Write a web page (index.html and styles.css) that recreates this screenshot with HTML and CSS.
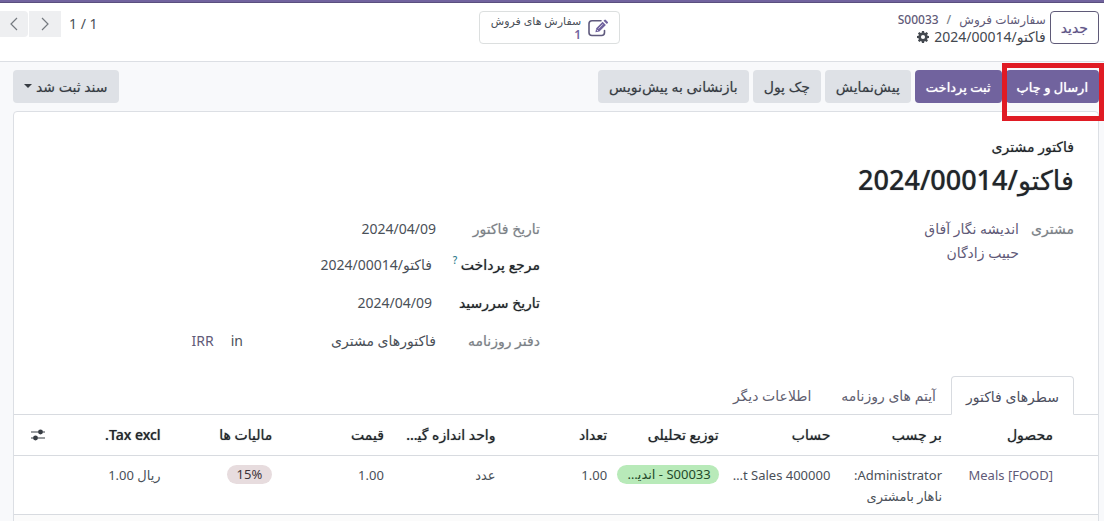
FILE: index.html
```html
<!DOCTYPE html>
<html lang="fa" dir="rtl">
<head>
<meta charset="utf-8">
<title>فاکتو/2024/00014</title>
<meta name="viewport" content="width=device-width, initial-scale=1">
<link rel="stylesheet" href="styles.css">
</head>
<body>
<div class="navbar-edge"></div>
<header class="control-panel">
  <div class="control-start">
    <button class="btn btn-outline" type="button">جدید</button>
    <nav class="breadcrumb" aria-label="مسیر">
      <div class="crumbs"><a href="#orders">سفارشات فروش</a><span class="crumb-sep">/</span><a href="#order">S00033</a></div>
      <div class="crumb-current"><span>فاکتو/2024/00014</span>
        <button class="gear" type="button" aria-label="تنظیمات">
          <svg viewBox="0 0 14 14" width="12" height="12"><path fill="currentColor" fill-rule="evenodd" d="M5.8 0h2.4l.4 1.9 1 .4L11.200 1.200l1.700 1.700-1.100 1.600.4 1 1.800.4v2.300l-1.900.4-.4 1 1.100 1.600-1.700 1.700-1.600-1.100-1 .4L8.200 14H5.800l-.4-1.800-1-.4-1.600 1.100-1.700-1.700 1.100-1.600-.4-1L0 8.200V5.900l1.800-.4.4-1L1.100 2.900l1.700-1.700 1.600 1.100 1-.4zM7 4.600a2.400 2.400 0 1 0 0 4.800 2.400 2.400 0 0 0 0-4.800z"/></svg>
        </button>
      </div>
    </nav>
  </div>
  <button class="stat-button" type="button">
    <svg viewBox="0 0 20 18" width="20" height="18" fill="none"><path d="M13 1.800H4A3 3 0 0 0 1 4.800v8.700a3 3 0 0 0 3 3h9.500a3 3 0 0 0 3-3V11.500" stroke="#5f5a7d" stroke-width="1.600" stroke-linecap="round"/><path d="M14.600 2.700l3.300 3.300-6.500 6.500-4 .8.800-4zM15.500 1.800l.8-.8a1.100 1.100 0 0 1 1.600 0l1.700 1.700a1.100 1.100 0 0 1 0 1.600l-.8.800z" fill="#71639e"/><path d="M10.500 9.600l4.300-4.300M8.700 10.700l1.300 1.300" stroke="#fff" stroke-width=".7"/></svg>
    <span class="stat-text"><span>سفارش های فروش</span><span class="stat-value">1</span></span>
  </button>
  <div class="pager">
    <span class="pager-count">1 / 1</span>
    <div class="pager-buttons">
      <button type="button" aria-label="قبلی"><svg viewBox="0 0 10 14" width="10" height="14"><path d="M2 1l6 6-6 6" fill="none" stroke="currentColor" stroke-width="1.200"/></svg></button>
      <button type="button" aria-label="بعدی"><svg viewBox="0 0 10 14" width="10" height="14"><path d="M8 1L2 7l6 6" fill="none" stroke="currentColor" stroke-width="1.200"/></svg></button>
    </div>
  </div>
</header>
<main class="form-view">
  <div class="statusbar">
    <div class="actions">
      <div class="highlighted"><button class="btn btn-primary" type="button">ارسال و چاپ</button></div>
      <button class="btn btn-primary" type="button">ثبت پرداخت</button>
      <button class="btn btn-secondary" type="button">پیش‌نمایش</button>
      <button class="btn btn-secondary" type="button">چک پول</button>
      <button class="btn btn-secondary" type="button">بازنشانی به پیش‌نویس</button>
    </div>
    <button class="btn btn-secondary btn-state" type="button">سند ثبت شد<span class="caret"></span></button>
  </div>
  <section class="sheet">
    <div class="sheet-title">
      <div class="doc-type">فاکتور مشتری</div>
      <h1>فاکتو/2024/00014</h1>
    </div>
    <div class="groups">
      <dl class="group group-partner">
        <dt>مشتری</dt>
        <dd><a href="#partner">اندیشه نگار آفاق<br>حبیب زادگان</a></dd>
      </dl>
      <div class="group group-dates">
        <span class="label">تاریخ فاکتور</span><span class="value">2024/04/09</span>
        <label class="label required" for="payref">مرجع پرداخت <sup>?</sup></label><input class="value" id="payref" type="text" value="فاکتو/2024/00014">
        <label class="label required" for="due">تاریخ سررسید</label><input class="value" id="due" type="text" value="2024/04/09">
        <span class="label">دفتر روزنامه</span>
        <span class="value journal"><span class="journal-name">فاکتورهای مشتری</span><span class="journal-in">in</span><a href="#currency">IRR</a></span>
      </div>
    </div>
    <div class="tabs" role="tablist">
      <button class="tab active" role="tab" aria-selected="true" type="button">سطرهای فاکتور</button>
      <button class="tab" role="tab" aria-selected="false" type="button">آیتم های روزنامه</button>
      <button class="tab" role="tab" aria-selected="false" type="button">اطلاعات دیگر</button>
    </div>
    <table class="lines">
      <colgroup><col class="col-product"><col span="8"><col class="col-options"></colgroup>
      <thead>
        <tr>
          <th>محصول</th><th>بر چسب</th><th>حساب</th><th>توزیع تحلیلی</th><th>تعداد</th><th>واحد اندازه گیری</th><th>قیمت</th><th>مالیات ها</th><th>Tax excl.</th>
          <th class="options"><button type="button" aria-label="ستون ها"><svg viewBox="0 0 16 12" width="16" height="12"><path d="M1 3h14M1 9h14" stroke="currentColor" stroke-width="1.200"/><circle cx="10.500" cy="3" r="2.400" fill="currentColor"/><circle cx="5.500" cy="9" r="2.400" fill="currentColor"/></svg></button></th>
        </tr>
      </thead>
      <tbody>
        <tr class="line">
          <td><a href="#product">[FOOD] Meals</a></td>
          <td>Administrator:<br>ناهار بامشتری</td>
          <td>400000 Product Sales</td>
          <td><span class="tag tag-green">S00033 - اندیشه نگار آفاق</span></td>
          <td>1.00</td>
          <td>عدد</td>
          <td>1.00</td>
          <td><span class="tag tag-rose">15%</span></td>
          <td>ریال 1.00</td>
          <td></td>
        </tr>
        <tr class="spare"><td colspan="10"></td></tr>
      </tbody>
    </table>
  </section>
</main>
</body>
</html>
```
FILE: styles.css
```css
* { box-sizing: border-box; }
body {
  margin: 0;
  background: #f8f9fb;
  color: #4a5058;
  font: 14px/24px "Noto Sans", "DejaVu Sans", sans-serif;
  overflow: hidden;
}
button, input { font: inherit; color: inherit; margin: 0; }
button { cursor: pointer; white-space: nowrap; }
a { color: #5f5a78; text-decoration: none; }
svg { display: block; }

.navbar-edge { height: 3px; background: #71639e; border-bottom: 1px solid #5a4f7f; }
.control-panel {
  display: grid;
  grid-template-columns: 1fr auto 1fr;
  align-items: start;
  height: 59px;
  padding: 8px 5px 0 0;
  background: #fff;
  border-bottom: 1px solid #dcdfe4;
}
.control-start { display: flex; gap: 4px; }
.btn {
  height: 33px;
  padding: 0 10px;
  border: 1px solid transparent;
  border-radius: 4px;
  line-height: 30px;
}
.btn-outline { background: #fff; border-color: #5f5a78; color: #5f5486; font-weight: 500; text-shadow: 0 0 1px #a9a1c4; }
.btn-primary { background: #71639e; color: #fff; font-size: 13px; font-weight: 500; text-shadow: 0 0 1px #fff; }
.btn-secondary { background: #dee1e6; color: #373c43; font-weight: 500; text-shadow: 0 0 1px #9a9fa6; }
.breadcrumb { line-height: 17px; }
.crumbs { display: flex; gap: 8px; font-size: 12px; font-weight: 500; }
.crumb-sep { color: #7a8087; }
.crumb-current { display: flex; align-items: center; gap: 5px; color: #43484f; }
.gear { padding: 0; border: 0; background: none; color: #43484f; }

.stat-button {
  display: flex;
  align-items: center;
  gap: 7px;
  height: 33px;
  padding: 0 11px;
  background: #fff;
  border: 1px solid #dcdfdf;
  border-radius: 4px;
  font-size: 11px;
  line-height: 14px;
}
.stat-text { display: flex; flex-direction: column; align-items: flex-start; }
.stat-value { color: #71639e; font-size: 12px; font-weight: 600; }

.pager { display: flex; justify-content: flex-end; align-items: center; gap: 8px; }
.pager-buttons { display: flex; gap: 1px; }
.pager-buttons button {
  display: grid;
  place-items: center;
  width: 32px;
  height: 26px;
  padding: 0;
  border: 0;
  background: #eeeff1;
  color: #74797f;
}
.pager-buttons button:last-child { width: 28px; border-radius: 0 4px 4px 0; }

.form-view { padding: 8px 5px 0 13px; }
.statusbar { display: flex; justify-content: space-between; margin-bottom: 8px; }
.actions { display: flex; gap: 4px; }
.highlighted { position: relative; }
.highlighted::after {
  content: "";
  position: absolute;
  inset: -7px -5px -18px -4px;
  border: 5px solid #e01b24;
  pointer-events: none;
}
.caret {
  display: inline-block;
  margin-inline-start: 4px;
  border: 4px solid transparent;
  border-top-color: currentColor;
  border-bottom: 0;
  vertical-align: 4px;
}

.sheet { background: #fff; border: 1px solid #dcdfe4; border-radius: 4px 4px 0 0; }
.sheet-title { padding: 23px 24px 0; color: #212529; text-shadow: 0 0 1px #8c9095; }
.doc-type { font-weight: 500; }
h1 { margin: 0; font-size: 27px; line-height: 42px; font-weight: 500; }
.groups { display: grid; grid-template-columns: 1fr 1fr; gap: 32px; padding: 16px 24px 0; }
.group { margin: 0; }
.group-partner { display: grid; grid-template-columns: 55px 1fr; align-content: start; }
.group-partner dt, .label { color: #7c8187; font-weight: 500; text-shadow: 0 0 1px #c4c7ca; }
.group-partner dd { margin: 0; }
.group-dates {
  display: grid;
  grid-template-columns: 104px 1fr;
  grid-template-rows: 24px 48px 28px 48px;
  align-items: center;
}
.label.required { color: #212529; text-shadow: 0 0 1px #6c7075; }
.label sup { font-size: 10px; line-height: 10px; color: #2d7a8c; text-shadow: none; }
input.value { width: 100%; padding: 0 4px; border: 0; background: none; height: 24px; }
.journal { display: flex; }
.journal-name { width: 193px; }
.journal-in { margin-inline-end: 17px; }

.tabs { display: flex; margin-top: 11px; padding: 0 24px; border-bottom: 1px solid #d8dbe0; }
.tab { height: 38px; padding: 2px 14px 0; border: 1px solid transparent; background: none; color: #5f6070; }
.tab.active {
  margin-bottom: -1px;
  height: 39px;
  background: #fff;
  border-color: #d8dbe0 #d8dbe0 #fff;
  border-radius: 4px 4px 0 0;
  color: #4d4f60;
}

.lines { width: 100%; table-layout: fixed; border-collapse: collapse; }
.col-product { width: 151px; }
.col-options { width: 40px; }
.lines th, .lines td {
  padding: 9px 5px 8px;
  text-align: start;
  vertical-align: top;
  line-height: 21px;
  overflow: hidden;
  white-space: nowrap;
  text-overflow: ellipsis;
}
.lines td { padding-bottom: 7px; font-size: 13px; }
.lines th {
  height: 40px;
  padding-inline-end: 17px;
  color: #212529;
  font-weight: 500;
  text-shadow: 0 0 1px #6c7075;
}
.lines tr > :first-child { padding-inline-start: 45px; }
.lines tr { border-bottom: 1px solid #d8dbe0; }
.lines .options { padding: 14px 8px; }
.options button { display: block; padding: 0; border: 0; background: none; color: #373c43; }
.tag {
  display: inline-block;
  max-width: 100%;
  padding: 0 10px;
  border-radius: 10px;
  line-height: 19px;
  overflow: hidden;
  text-overflow: ellipsis;
  vertical-align: top;
}
.tag-green { padding: 0 8px; background: #b8eab9; color: #23492a; }
.tag-rose { background: #e7dcde; color: #40343a; }
.spare { background: #fbfbfb; }
```
